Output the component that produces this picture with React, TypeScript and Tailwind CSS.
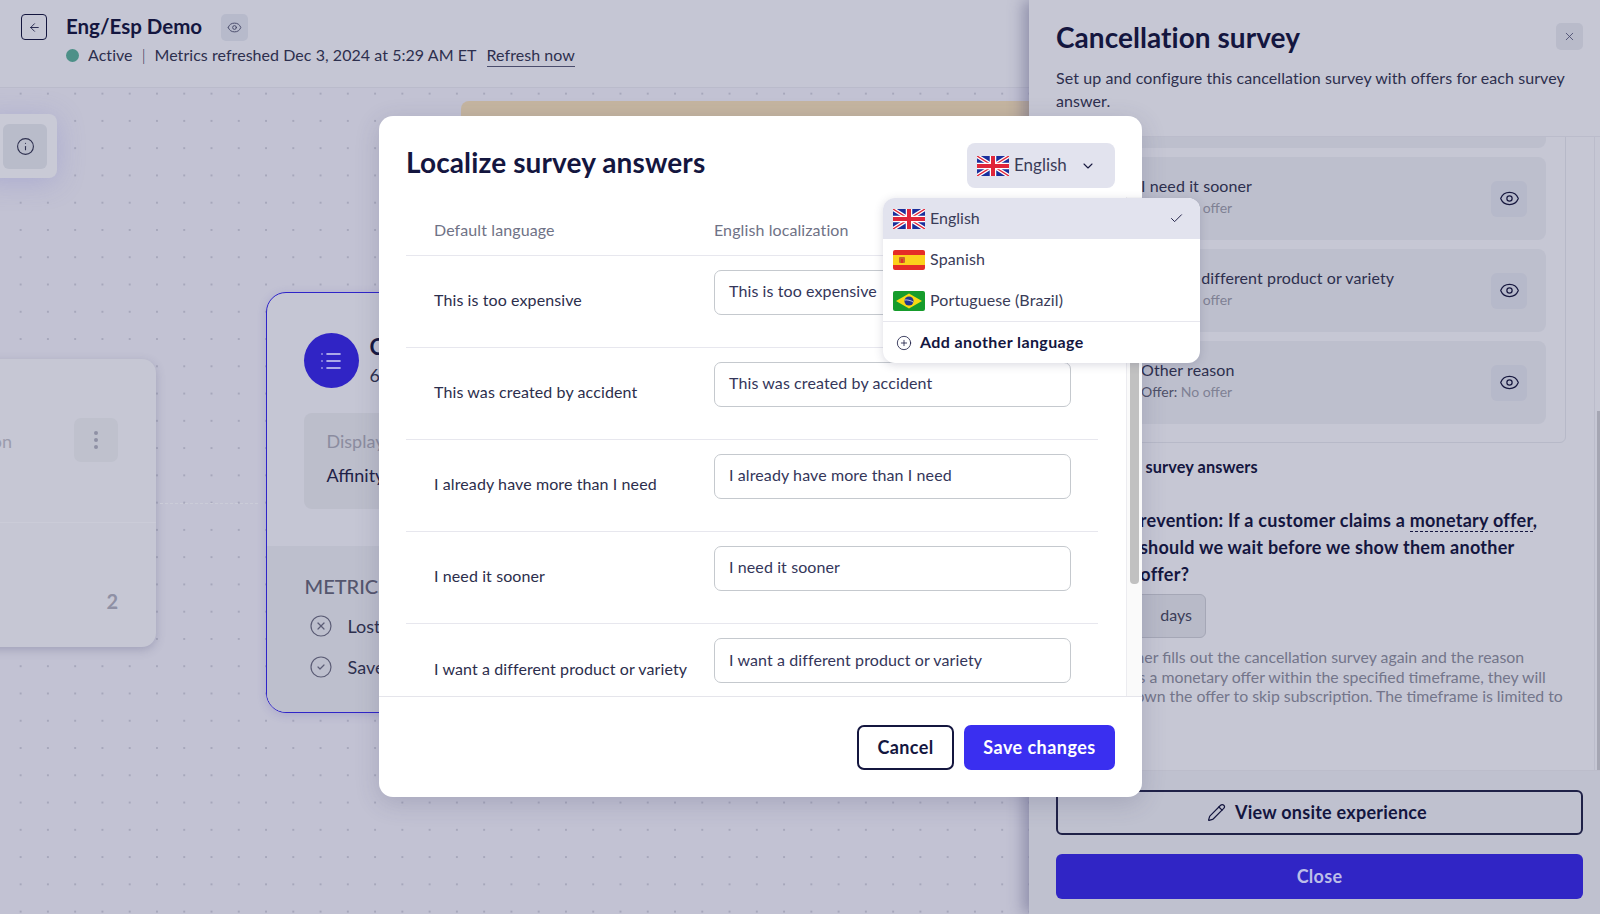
import { ArrowLeft, Check, ChevronDown, CircleCheck, CirclePlus, CircleX, Eye, Info, List, Pencil, X } from "lucide-react";

function FlagUK() {
  return (
    <svg viewBox="0 0 32 20" className="h-5 w-8 shrink-0">
      <rect width="32" height="20" fill="#1a2f9c" />
      <path d="M0 0L32 20M32 0L0 20" stroke="#fff" strokeWidth="4" />
      <path d="M0 0L32 20M32 0L0 20" stroke="#e0263a" strokeWidth="1.4" />
      <path d="M16 0V20M0 10H32" stroke="#fff" strokeWidth="6.5" />
      <path d="M16 0V20M0 10H32" stroke="#e0263a" strokeWidth="4" />
    </svg>
  );
}
function FlagES() {
  return (
    <svg viewBox="0 0 32 20" className="h-5 w-8 shrink-0">
      <rect width="32" height="20" rx="2" fill="#e52d27" />
      <rect y="5" width="32" height="10" fill="#fbd11c" />
      <rect x="6" y="7" width="6" height="6" rx="1" fill="#c9652a" />
      <rect x="8" y="9" width="2" height="4" fill="#e52d27" />
    </svg>
  );
}
function FlagBR() {
  return (
    <svg viewBox="0 0 32 20" className="h-5 w-8 shrink-0">
      <rect width="32" height="20" rx="2" fill="#169c2c" />
      <path d="M16 2.5L29 10L16 17.5L3 10Z" fill="#f8d912" />
      <circle cx="16" cy="10" r="4.6" fill="#23358f" />
      <path d="M11.6 9C14 8.6 18 9.4 20.4 11.2" stroke="#fff" strokeWidth="0.7" fill="none" />
    </svg>
  );
}

const rows = [
  "This is too expensive",
  "This was created by accident",
  "I already have more than I need",
  "I need it sooner",
  "I want a different product or variety",
];

function OfferCard({ title }: { title: string }) {
  return (
    <div className="flex h-[83px] items-center justify-between rounded-[8px] bg-[#bdbfcd] pl-[64px] pr-[19px]">
      <div className="-mt-[3px]">
        <div className="text-[16px] leading-[22px] tracking-[0.1px] text-[#2d2f4e]">{title}</div>
        <div className="text-[14px] leading-[22px] text-[#7f8194]">
          <span className="text-[#4e5068]">Offer:</span> No offer
        </div>
      </div>
      <div className="flex h-9 w-9 items-center justify-center rounded-[6px] bg-[#b6b9ca] text-[#17183f]">
        <Eye size={21} strokeWidth={1.4} />
      </div>
    </div>
  );
}

export default function App() {
  return (
    <div className="relative flex h-[914px] w-[1600px] flex-col overflow-hidden bg-[#c2c2d3] font-['Lato','Noto_Sans',sans-serif] text-[#1f2147]">
      {/* top bar */}
      <header className="flex h-[88px] shrink-0 items-start border-b border-[#babbcb] bg-[#c5c6d4] pl-[21px] pt-[14px]">
        <div className="flex h-[26px] w-[26px] items-center justify-center rounded-[4px] border-[1.5px] border-[#14163f] text-[#14163f]">
          <ArrowLeft size={13} strokeWidth={1.6} />
        </div>
        <div className="ml-[19px]">
          <div className="flex items-center">
            <h1 className="-mt-[3px] text-[20.5px] font-bold leading-[27px] text-[#14163f]">Eng/Esp Demo</h1>
            <div className="ml-[19px] flex h-[27px] w-[27px] items-center justify-center rounded-[5px] bg-[#b7bacb] text-[#3d3f60]">
              <Eye size={15} strokeWidth={1.4} />
            </div>
          </div>
          <div className="flex items-center text-[16px] leading-[28px] tracking-[0.05px] text-[#2d2f4e]">
            <span className="mr-[9px] h-[13px] w-[13px] rounded-full bg-[#4d9088]" />
            Active
            <span className="mx-[9px] font-light">|</span>
            Metrics refreshed Dec 3, 2024 at 5:29 AM ET
            <span className="ml-[10px] border-b-[1.5px] border-[#4a4c6c] leading-[23px]">Refresh now</span>
          </div>
        </div>
      </header>

      {/* canvas */}
      <main className="relative flex-1 bg-[#c2c2d3] bg-[radial-gradient(circle,#9b9cb1_0.6px,transparent_0.9px)] bg-[length:27.27px_27.27px] bg-[position:7px_-8px]">
        <div className="absolute left-[-20px] top-[26px] flex h-[64px] w-[77px] items-center justify-end rounded-[8px] bg-[#c9cad6] pr-[10px] shadow-[0_4px_28px_rgba(110,110,200,0.28)]">
          <div className="flex h-[45px] w-[44px] items-center justify-center rounded-[6px] bg-[#b9bcca] text-[#2f3150]">
            <Info size={19} strokeWidth={1.4} />
          </div>
        </div>

        <div className="absolute left-[461px] top-[13px] h-[120px] w-[600px] rounded-tl-[8px] bg-[#c5b5a0]" />

        {/* left node */}
        <div className="absolute left-[-200px] top-[271px] flex h-[288px] w-[356px] flex-col rounded-[14px] bg-[#c6c7d4] shadow-[0_3px_10px_rgba(90,90,130,0.3)]">
          <div className="flex h-[164px] shrink-0 items-center justify-end border-b border-[#cbccd8] pr-[38px]">
            <span className="mr-[62px] mt-[2px] text-[18px] text-[#9b9cad]">Subscription</span>
            <div className="-mt-[1px] flex h-[44px] w-[44px] flex-col items-center justify-center gap-[2.5px] rounded-[7px] bg-[#bfc1cd]">
              <span className="h-[4.5px] w-[4.5px] rounded-full bg-[#8f90a4]" />
              <span className="h-[4.5px] w-[4.5px] rounded-full bg-[#8f90a4]" />
              <span className="h-[4.5px] w-[4.5px] rounded-full bg-[#8f90a4]" />
            </div>
          </div>
          <div className="pr-[38px] pt-[63px] text-right text-[20px] font-bold leading-[30px] text-[#8f90a4]">2</div>
        </div>

        <div className="absolute left-[160px] top-[415px] w-[98px] border-t-[1.5px] border-dashed border-[#cbccd8]" />

        {/* main node */}
        <div className="absolute left-[265.5px] top-[203.5px] flex h-[421px] w-[600px] flex-col overflow-hidden rounded-[20px] border-[1.5px] border-[#2f25c8] bg-[#c5c6d4] shadow-[0_2px_10px_rgba(70,60,180,0.18)]">
          <div className="h-[253px] shrink-0 pl-[37px] pt-[40px]">
            <div className="flex items-center">
              <div className="flex h-[55px] w-[55px] items-center justify-center rounded-full bg-[#3024c5] text-[#d4d5f4]">
                <List size={24} strokeWidth={1.6} />
              </div>
              <div className="ml-[11px]">
                <div className="text-[22px] font-bold leading-[28px] text-[#14163f]">Cancellation survey</div>
                <div className="text-[18px] leading-[28px] text-[#2d2f4e]">6 answers</div>
              </div>
            </div>
            <div className="mt-[24px] h-[96px] w-[500px] rounded-[8px] bg-[#bcbecb] pl-[23px] pt-[13px]">
              <div className="text-[18px] leading-[30px] text-[#8b8c9f]">Display name</div>
              <div className="mt-[4px] text-[18px] leading-[30px] text-[#1f2147]">Affinity Box</div>
            </div>
          </div>
          <div className="flex-1 bg-[#bdbfcd] pl-[38px] pt-[26px]">
            <div className="text-[20px] font-medium leading-[28px] text-[#55566e]">METRICS</div>
            <div className="mt-[14px] flex items-center text-[18px] leading-[24px] text-[#2d2f4e]">
              <CircleX size={24} strokeWidth={1.2} className="ml-[4px] text-[#5c5d76]" />
              <span className="ml-[15px]">Lost</span>
            </div>
            <div className="mt-[17px] flex items-center text-[18px] leading-[24px] text-[#2d2f4e]">
              <CircleCheck size={24} strokeWidth={1.2} className="ml-[4px] text-[#5c5d76]" />
              <span className="ml-[15px]">Saved</span>
            </div>
          </div>
        </div>
      </main>

      {/* side drawer */}
      <aside className="absolute bottom-0 right-0 top-0 flex w-[571px] flex-col bg-[#c6c7d4] shadow-[-6px_0_14px_rgba(70,70,115,0.4)]">
        <div className="relative h-[137px] shrink-0 border-b border-[#bbbccb] pl-[27px] pr-[30px] pt-[18px]">
          <h2 className="text-[28px] font-bold leading-[38px] tracking-[0.05px] text-[#14163f]">Cancellation survey</h2>
          <p className="mt-[9.5px] text-[16px] leading-[23px] tracking-[0.08px] text-[#2d2f4e]">
            Set up and configure this cancellation survey with offers for each survey
            <br />
            answer.
          </p>
          <div className="absolute right-[17px] top-[23px] flex h-[27px] w-[27px] items-center justify-center rounded-[5px] bg-[#b9bbca] text-[#43456a]">
            <X size={13} strokeWidth={1.5} />
          </div>
        </div>

        <div className="flex min-h-0 flex-1 overflow-hidden">
          <div className="min-w-0 flex-1 pl-[28px]">
            <div className="-mt-[73px] flex w-[509px] flex-col gap-[9px] rounded-[6px] border border-[#b7b9c8] px-[19px] pb-[18px]">
              <div className="h-[83px] rounded-[8px] bg-[#bdbfcd]" />
              <OfferCard title="I need it sooner" />
              <OfferCard title="I want a different product or variety" />
              <OfferCard title="Other reason" />
            </div>
            <div className="ml-[26px] mt-[14px] text-[16.3px] font-bold leading-[20px] tracking-[0.1px] text-[#14163f]">Localize survey answers</div>
            <p className="mt-[30px] whitespace-nowrap text-[18px] font-bold leading-[27px] tracking-[0.25px] text-[#14163f]">
              <span className="-ml-[6px]">
                Discount prevention: If a customer claims a{" "}
                <span className="border-b border-dashed border-[#14163f]">monetary offer</span>,
              </span>
              <br />
              <span className="ml-[3px]">how long should we wait before we show them another</span>
              <br />
              monetary offer?
            </p>
            <div className="mt-[6px] flex h-[44px] w-[149px] items-center justify-end rounded-[6px] border border-[#a5a7b6] bg-[#b8bac8] pb-[2px] pr-[13px] text-[16px] text-[#3c3e5a]">
              days
            </div>
            <p className="mt-[9px] whitespace-nowrap text-[15.85px] leading-[19.5px] text-[#73758a]">
              <span className="ml-[11px]">If a customer fills out the cancellation survey again and the reason</span>
              <br />
              <span className="ml-[3px]">selected has a monetary offer within the specified timeframe, they will</span>
              <br />
              <span className="ml-[8px]">only be shown the offer to skip subscription. The timeframe is limited to</span>
            </p>
          </div>
          <div className="flex w-[6px] shrink-0 justify-end border-l border-[#bbbccb] pt-[274px]">
            <div className="h-full w-[3px] bg-[#a5a6b3]" />
          </div>
        </div>

        <div className="flex h-[144px] shrink-0 flex-col gap-[19px] border-t border-[#bcbdcb] bg-[#bfc1cf] pl-[27px] pr-[17px] pt-[19px]">
          <div className="flex h-[45px] items-center justify-center rounded-[6px] border-2 border-[#1f2147] pr-[5px] text-[18px] font-bold tracking-[0.25px] text-[#14163f]">
            <Pencil size={19} strokeWidth={1.5} className="mr-[9px]" />
            View onsite experience
          </div>
          <div className="flex h-[45px] items-center justify-center rounded-[6px] bg-[#3025c5] text-[18px] font-bold tracking-[0.3px] text-[#bcbde8]">
            Close
          </div>
        </div>
      </aside>

      {/* modal */}
      <div className="absolute left-[379px] top-[116px] flex h-[681px] w-[763px] flex-col rounded-[14px] bg-white text-[#2c2e4c] shadow-[0_6px_24px_rgba(60,60,100,0.2)]">
        <div className="flex h-[81px] shrink-0 items-start justify-between pl-[27px] pr-[27px] pt-[27px]">
          <h2 className="text-[28px] font-bold leading-[38px] tracking-[0.12px] text-[#14163f]">Localize survey answers</h2>
          <div className="flex h-[45px] w-[148px] items-center rounded-[8px] bg-[#e2e3ee] pl-[10px]">
            <FlagUK />
            <span className="-mt-[2px] ml-[5px] text-[17px] text-[#3a3c58]">English</span>
            <ChevronDown size={16} strokeWidth={1.6} className="ml-[13px] text-[#17183f]" />
          </div>
        </div>

        <div className="flex min-h-0 flex-1 overflow-hidden">
          <div className="min-w-0 flex-1 pl-[27px] pr-[28px]">
            <div className="flex h-[59px] items-center border-b border-[#e7e7ee] pl-[28px] pt-[7px] text-[16px] tracking-[0.1px] text-[#6f7286]">
              <span className="w-[280px]">Default language</span>
              <span>English localization</span>
            </div>
            {rows.map((r, i) => (
              <div key={r} className={`flex h-[92px] items-center pl-[28px] ${i < 4 ? "border-b border-[#e7e7ee]" : ""}`}>
                <span className="-mt-[3px] w-[280px] text-[16px] tracking-[0.1px]">{r}</span>
                <div className="-mt-[19px] flex h-[45px] w-[357px] items-center rounded-[7px] border border-[#c5c9ce] pb-[2px] pl-[14px] text-[16px] tracking-[0.1px] text-[#34365a]">
                  {r}
                </div>
              </div>
            ))}
          </div>
          <div className="flex w-[16px] shrink-0 justify-center border-l border-[#ececf0] bg-[#fafafa] pt-[5px]">
            <div className="h-[382px] w-[9px] rounded-[4px] bg-[#c1c1c1]" />
          </div>
        </div>

        <div className="flex h-[101px] shrink-0 items-start justify-end gap-[10px] border-t border-[#e5e5eb] pr-[27px] pt-[28px]">
          <div className="flex h-[45px] w-[97px] items-center justify-center rounded-[7px] border-2 border-[#14163f] text-[18px] font-bold tracking-[0.4px] text-[#14163f]">
            Cancel
          </div>
          <div className="flex h-[45px] w-[151px] items-center justify-center rounded-[7px] bg-[#3a2ff0] text-[18px] font-bold tracking-[0.45px] text-white">
            Save changes
          </div>
        </div>

        {/* language menu */}
        <div className="absolute left-[504px] top-[82px] w-[317px] overflow-hidden rounded-[12px] bg-white text-[16px] text-[#3a3c58] shadow-[0_2px_10px_rgba(50,50,90,0.18)]">
          <div className="flex h-[41px] items-center bg-[#e2e3ee] pl-[10px] pr-[16px]">
            <FlagUK />
            <span className="-mt-[2px] ml-[5px] flex-1">English</span>
            <Check size={15} strokeWidth={1.5} className="text-[#17183f]" />
          </div>
          <div className="flex h-[41px] items-center pl-[10px]">
            <FlagES />
            <span className="-mt-[2px] ml-[5px] tracking-[0.15px]">Spanish</span>
          </div>
          <div className="flex h-[41px] items-center pl-[10px]">
            <FlagBR />
            <span className="-mt-[2px] ml-[5px] tracking-[0.1px]">Portuguese (Brazil)</span>
          </div>
          <div className="flex h-[42px] items-center border-t border-[#e7e7ee] pl-[13px] font-bold tracking-[0.4px] text-[#14163f]">
            <CirclePlus size={16} strokeWidth={1.2} />
            <span className="-mt-[2px] ml-[8px]">Add another language</span>
          </div>
        </div>
      </div>
    </div>
  );
}
